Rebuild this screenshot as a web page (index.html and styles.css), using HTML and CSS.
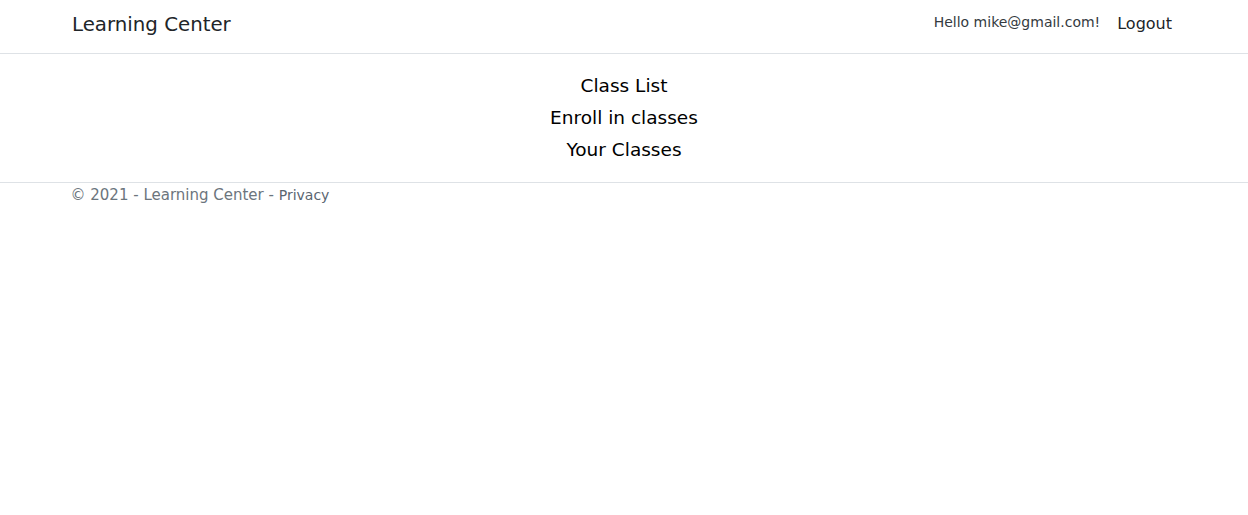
FILE: index.html
```html
<!DOCTYPE html>
<html lang="en">
<head>
<meta charset="utf-8">
<title>Learning Center</title>
<link rel="stylesheet" href="styles.css">
</head>
<body>
<header class="site-header">
  <nav class="container navbar">
    <a class="brand" href="#">Learning Center</a>
    <div class="nav-right">
      <span class="hello">Hello mike@gmail.com!</span>
      <a class="nav-link" href="#">Logout</a>
    </div>
  </nav>
</header>
<main class="main">
  <a class="main-link" href="#">Class List</a>
  <a class="main-link" href="#">Enroll in classes</a>
  <a class="main-link" href="#">Your Classes</a>
</main>
<footer class="footer">
  <div class="container footer-inner">© 2021 - Learning Center - <a class="privacy" href="#">Privacy</a></div>
</footer>
</body>
</html>
```
FILE: styles.css
```css
html, body {
  margin: 0;
  padding: 0;
  background: #fff;
}
body {
  font-family: "DejaVu Sans", "Noto Sans", sans-serif;
  color: #212529;
}
a {
  text-decoration: none;
}
.container {
  max-width: 1110px;
  margin: 0 auto;
  padding: 0 15px;
}
.site-header {
  border-bottom: 1px solid #dee2e6;
}
.navbar {
  display: flex;
  align-items: center;
  justify-content: space-between;
  height: 47px;
  padding-bottom: 6px;
}
.brand {
  color: #212529;
  font-size: 19.8px;
  margin-left: 3px;
  margin-top: 2px;
}
.nav-right {
  display: flex;
  align-items: center;
  gap: 9px;
}
.hello {
  color: #343a40;
  font-size: 14px;
  margin-top: -3px;
}
.nav-link {
  color: #212529;
  font-size: 16px;
  padding: 0 7px 0 8px;
}
.main {
  display: flex;
  flex-direction: column;
  align-items: center;
  padding: 16px 0 16px;
  border-bottom: 1px solid #dee2e6;
}
.main-link {
  color: #000;
  font-size: 18.5px;
  line-height: 32px;
}
.footer-inner {
  color: #6c757d;
  font-size: 15px;
  line-height: 22px;
  padding-top: 1px;
  padding-left: 18px;
}
.privacy {
  color: #5a6570;
  font-size: 14px;
}
```
